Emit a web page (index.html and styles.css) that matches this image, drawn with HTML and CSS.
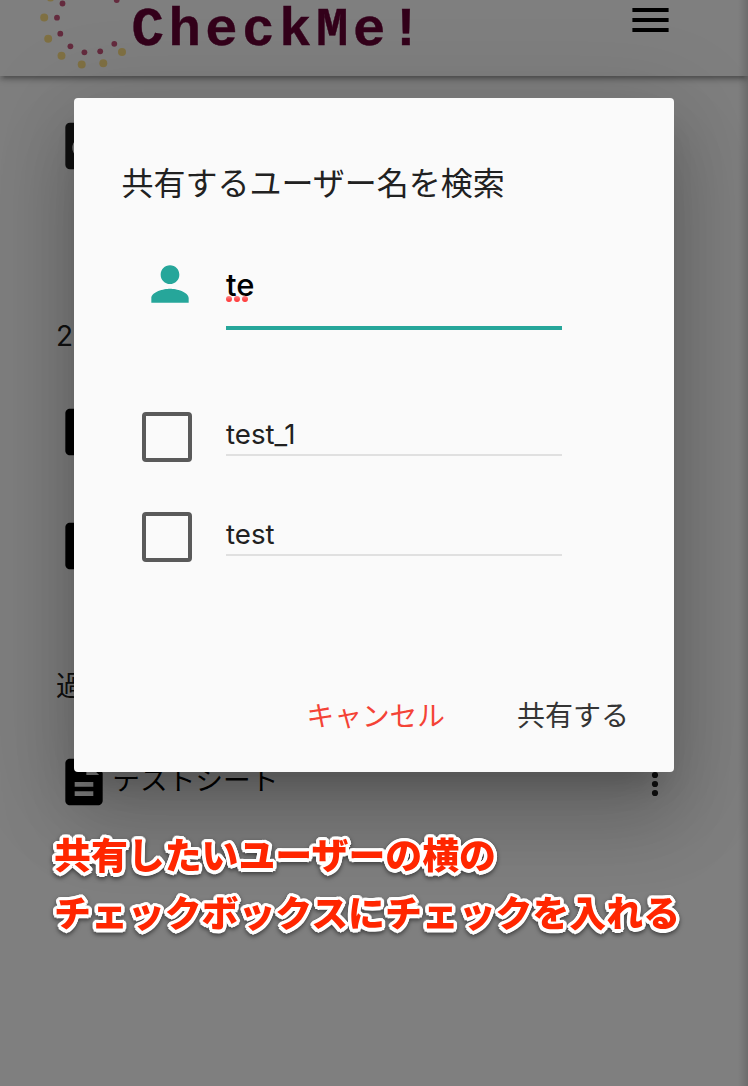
FILE: index.html
```html
<!DOCTYPE html>
<html lang="ja">
<head>
<meta charset="utf-8">
<title>CheckMe!</title>
<link rel="stylesheet" href="styles.css">
</head>
<body>
<svg class="sprite" aria-hidden="true">
  <symbol id="sheet" viewBox="0 0 24 24"><path d="M14 2H6c-1.1 0-1.99.9-1.99 2L4 20c0 1.1.89 2 1.99 2H18c1.1 0 2-.9 2-2V8l-6-6zm2 16H8v-2h8v2zm0-4H8v-2h8v2zm-3-5V3.5L18.5 9H13z"/></symbol>
</svg>
<div class="page">
  <header class="navbar">
    <svg class="logo-mark" width="98" height="76" viewBox="34 0 98 76">
      <g fill="#ffe187">
        <circle cx="50.500" cy="-2.500" r="4"/><circle cx="44.200" cy="17.500" r="4"/><circle cx="48.200" cy="38.800" r="4"/><circle cx="61.500" cy="55.700" r="4"/><circle cx="81.700" cy="64.500" r="4"/><circle cx="103.300" cy="63.200" r="4"/><circle cx="122" cy="52" r="4"/>
      </g>
      <g fill="#c9567c">
        <circle cx="62.500" cy="3.500" r="2.900"/><circle cx="57" cy="17.700" r="2.900"/><circle cx="60.300" cy="33.700" r="2.900"/><circle cx="70.400" cy="46.300" r="2.900"/><circle cx="84.400" cy="52.300" r="2.900"/><circle cx="100.200" cy="51.300" r="2.900"/><circle cx="114.300" cy="43.800" r="2.900"/><circle cx="116.700" cy="0" r="2.900"/>
      </g>
    </svg>
    <span class="brand">CheckMe!</span>
    <svg class="menu" width="37" height="24" viewBox="0 0 37 24"><path d="M.4 0h36.200v4H.4zM.4 10h36.200v4H.4zM.4 20h36.200v4H.4z"/></svg>
  </header>
  <main class="content">
    <div class="row row-first"><svg class="icon icon-soft" viewBox="0 0 24 24"><path fill-rule="evenodd" d="M6 2h12a2 2 0 0 1 2 2v16a2 2 0 0 1-2 2H6a2 2 0 0 1-2-2V4a2 2 0 0 1 2-2zm6 6a5 4.800 0 1 0 0 9.600a5 4.800 0 0 0 0-9.600z"/></svg></div>
    <h2 class="heading heading-date">2</h2>
    <div class="row"><svg class="icon"><use href="#sheet"/></svg></div>
    <div class="row row-second"><svg class="icon"><use href="#sheet"/></svg></div>
    <h2 class="heading heading-past">過</h2>
    <div class="row row-last">
      <svg class="icon"><use href="#sheet"/></svg>
      <span class="row-title">テストシート</span>
      <svg class="more" width="8" height="30" viewBox="0 0 8 30"><circle cx="4" cy="6" r="3.100"/><circle cx="4" cy="15" r="3.100"/><circle cx="4" cy="24" r="3.100"/></svg>
    </div>
  </main>
  <div class="drawer-shadow"></div>
  <div class="overlay"></div>
  <section class="modal" role="dialog">
    <h1 class="modal-title">共有するユーザー名を検索</h1>
    <div class="search">
      <svg class="person" width="56" height="56" viewBox="0 0 24 24"><path d="M12 12c2.210 0 4-1.790 4-4s-1.790-4-4-4-4 1.790-4 4 1.790 4 4 4zm0 2c-2.670 0-8 1.340-8 4v2h16v-2c0-2.660-5.330-4-8-4z"/></svg>
      <div class="field"><span class="typed">te</span><span class="spelling"><i></i><i></i><i></i></span></div>
    </div>
    <div class="users">
      <label class="user"><span class="box"></span><span class="name">test_1</span></label>
      <label class="user"><span class="box"></span><span class="name">test</span></label>
    </div>
    <footer class="actions">
      <span class="cancel">キャンセル</span>
      <span class="share">共有する</span>
    </footer>
  </section>
  <p class="caption">共有したいユーザーの横の<br>チェックボックスにチェックを入れる</p>
</div>
</body>
</html>
```
FILE: styles.css
```css
* { box-sizing: border-box; }
body { margin: 0; font-family: Inter, "Noto Sans CJK JP", sans-serif; font-size: 28px; color: #212121; }
h1, h2, p { margin: 0; font-weight: 400; }
svg { display: block; flex: none; }
.sprite { position: absolute; width: 0; height: 0; }
.page { position: relative; width: 748px; height: 1086px; overflow: hidden; background: #fff; }

.navbar {
  position: relative;
  display: flex;
  align-items: flex-start;
  height: 76px;
  padding-left: 34px;
  background: #fff;
  box-shadow: 0 4px 4px rgba(0,0,0,.14), 0 6px 2px -4px rgba(0,0,0,.12), 0 2px 10px rgba(0,0,0,.2);
}
.brand { font: bold 54px/60px "Liberation Mono", monospace; letter-spacing: 4.500px; color: #660035; -webkit-text-stroke: .4px #660035; margin-left: -.5px; margin-top: 1px; }
.menu { margin-left: auto; margin-right: 79px; margin-top: 8px; fill: #000; }

.content { padding: 42px 56px 0; }
.row { display: flex; align-items: center; height: 56px; }
.icon { width: 56px; height: 56px; margin-left: .3px; fill: #000; }
.icon-soft { fill: #212121; }
.heading { font-size: 28px; line-height: 40px; }
.heading-date { margin-top: 142px; margin-bottom: 48px; }
.row-second { margin-top: 58px; }
.heading-past { margin-top: 92px; margin-bottom: 48px; }
.row-title { color: #000; font-size: 27.700px; margin-top: -8px; }
.more { margin-left: auto; margin-right: 33px; margin-top: 3px; fill: #212121; }

.drawer-shadow { position: absolute; top: 0; bottom: 0; right: 0; width: 10px; background: linear-gradient(90deg, rgba(0,0,0,0), rgba(0,0,0,.15)); }
.overlay { position: absolute; inset: 0; background: rgba(0,0,0,.5); }

.modal {
  position: absolute;
  left: 74px;
  top: 98px;
  width: 600px;
  height: 674px;
  padding: 64px 47.500px 0 47.500px;
  display: flex;
  flex-direction: column;
  border-radius: 4px;
  background: #fafafa;
  box-shadow: 0 48px 76px 6px rgba(0,0,0,.14), 0 18px 92px 16px rgba(0,0,0,.12), 0 22px 30px -14px rgba(0,0,0,.2);
}
.modal-title { font-size: 32px; line-height: 44px; white-space: nowrap; }
.search { display: flex; margin-top: 50px; padding-left: 20.500px; }
.person { fill: #26a69a; }
.field { position: relative; width: 336px; height: 74px; margin-left: 28px; border-bottom: 4px solid #26a69a; color: #000; }
.typed { display: block; font-size: 31px; font-weight: 450; line-height: 58px; }
.spelling { position: absolute; left: 0; top: 40px; display: flex; gap: 2px; }
.spelling i { width: 6px; height: 6px; border-radius: 50%; background: linear-gradient(#ff8080, #ff3030); }
.users { display: flex; flex-direction: column; gap: 50px; margin-top: 82px; padding-left: 20.500px; }
.user { display: flex; height: 50px; }
.box { width: 50px; height: 50px; border: 4px solid #5a5a5a; border-radius: 4px; }
.name { width: 336px; height: 44px; margin-left: 34px; border-bottom: 2px solid #e0e0e0; line-height: 45px; font-size: 27.700px; font-weight: 440; }
.actions { display: flex; justify-content: flex-end; margin-top: 134px; line-height: 40px; }
.cancel { color: #f44336; font-size: 27.700px; margin-right: 72px; }
.share { color: #343434; margin-right: -2.500px; }

.caption {
  position: absolute;
  left: 54px;
  top: 825px;
  white-space: nowrap;
  font: 900 36.900px/57.500px "Noto Sans CJK JP", sans-serif;
  color: #ff2600;
  text-shadow:
    3.500px 0 #fff, 3.200px 1.300px #fff, 2.500px 2.500px #fff, 1.300px 3.200px #fff,
    0 3.500px #fff, -1.300px 3.200px #fff, -2.500px 2.500px #fff, -3.200px 1.300px #fff,
    -3.500px 0 #fff, -3.200px -1.300px #fff, -2.500px -2.500px #fff, -1.300px -3.200px #fff,
    0 -3.500px #fff, 1.300px -3.200px #fff, 2.500px -2.500px #fff, 3.200px -1.300px #fff;
  filter: drop-shadow(0 2px 2px rgba(0,0,0,.5));
}
```
